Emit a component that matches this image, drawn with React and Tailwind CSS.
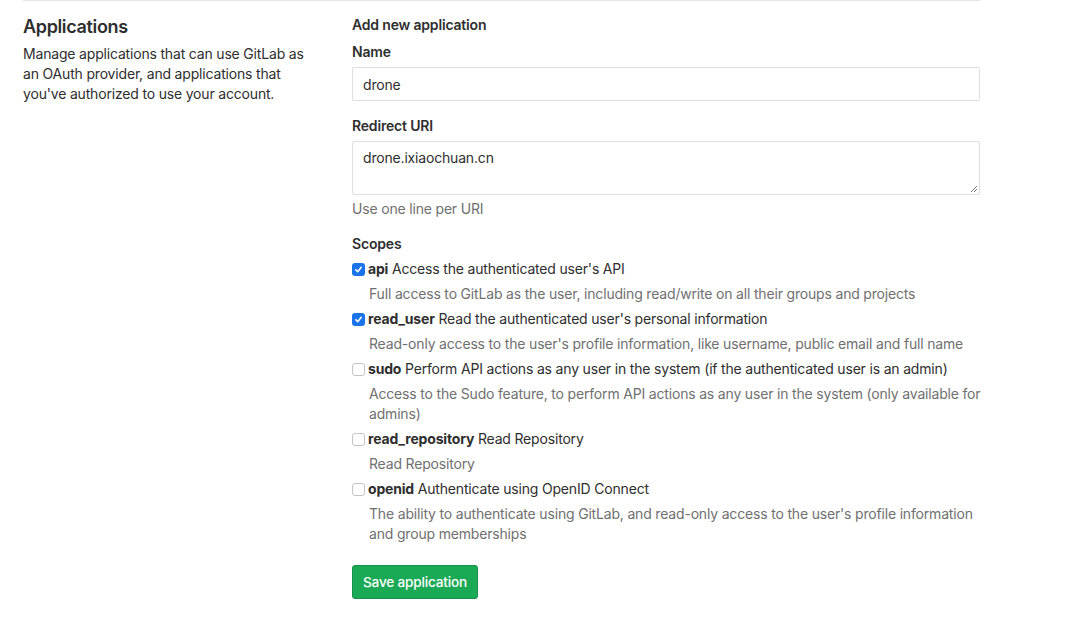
import React from "react";

const scopes = [
  {
    name: "api",
    title: "Access the authenticated user's API",
    desc: "Full access to GitLab as the user, including read/write on all their groups and projects",
    checked: true,
  },
  {
    name: "read_user",
    title: "Read the authenticated user's personal information",
    desc: "Read-only access to the user's profile information, like username, public email and full name",
    checked: true,
  },
  {
    name: "sudo",
    title: "Perform API actions as any user in the system (if the authenticated user is an admin)",
    desc: "Access to the Sudo feature, to perform API actions as any user in the system (only available for admins)",
    checked: false,
  },
  {
    name: "read_repository",
    title: "Read Repository",
    desc: "Read Repository",
    checked: false,
  },
  {
    name: "openid",
    title: "Authenticate using OpenID Connect",
    desc: "The ability to authenticate using GitLab, and read-only access to the user's profile information and group memberships",
    checked: false,
  },
];

const Checkbox = ({ checked }) =>
  checked ? (
    <span className="w-[13px] h-[13px] rounded-[3px] bg-[#1a73e8] flex items-center justify-center shrink-0">
      <svg width="9" height="9" viewBox="0 0 10 10" fill="none">
        <path d="M2 5.3 L4.1 7.4 L8 2.6" stroke="white" strokeWidth="1.8" strokeLinecap="round" strokeLinejoin="round" />
      </svg>
    </span>
  ) : (
    <span className="w-[13px] h-[13px] rounded-[3px] border border-[#c4c4c4] bg-white shrink-0" />
  );

export default function App() {
  return (
    <div className="bg-white min-h-screen text-[#2e2e2e] text-[14px] tracking-[-0.18px] font-['Inter','Liberation_Sans',sans-serif]">
      <div className="ml-[23px] w-[957px] border-t border-[#e5e5e5] flex">
        {/* left */}
        <div className="w-[329px]">
          <h4 className="text-[18px] font-semibold leading-[24px] mt-[14px] tracking-[-0.35px]">Applications</h4>
          <p className="mt-[5px] leading-[20px] w-[292px]">
            Manage applications that can use GitLab as an OAuth provider, and applications that you've authorized to use
            your account.
          </p>
        </div>

        {/* right */}
        <div className="flex-1">
          <h5 className="font-semibold leading-[20px] mt-[14px]">Add new application</h5>

          <label className="block font-semibold leading-[20px] mt-[7px]">Name</label>
          <div className="mt-[5px] h-[34px] border border-[#e0e0e0] rounded-[2px] px-[10px] flex items-center">
            drone
          </div>

          <label className="block font-semibold leading-[20px] mt-[15px]">Redirect URI</label>
          <div className="mt-[5px] h-[54px] border border-[#e0e0e0] rounded-[2px] px-[10px] pt-[5px] relative">
            drone.ixiaochuan.cn
            <svg className="absolute right-[1px] bottom-[1px]" width="8" height="8" viewBox="0 0 8 8">
              <path d="M7 1 L1 7 M7 4 L4 7" stroke="#7a7a7a" strokeWidth="1" />
            </svg>
          </div>
          <p className="text-[#707070] leading-[20px] mt-[4px]">Use one line per URI</p>

          <label className="block font-semibold leading-[20px] mt-[15px]">Scopes</label>
          <div className="mt-[5px]">
            {scopes.map((s) => (
              <div key={s.name} className="mb-[5px]">
                <div className="flex items-center gap-[3px] leading-[20px]">
                  <Checkbox checked={s.checked} />
                  <span>
                    <b className="font-bold">{s.name}</b> {s.title}
                  </span>
                </div>
                <p className="pl-[17px] mr-[-6px] text-[#707070] leading-[20px] mt-[5px]">{s.desc}</p>
              </div>
            ))}
          </div>

          <button className="mt-[16px] h-[34px] px-[10px] rounded-[3px] bg-[#1aaa55] border border-[#168f48] text-white text-[13.6px] font-medium">
            Save application
          </button>
        </div>
      </div>
    </div>
  );
}
